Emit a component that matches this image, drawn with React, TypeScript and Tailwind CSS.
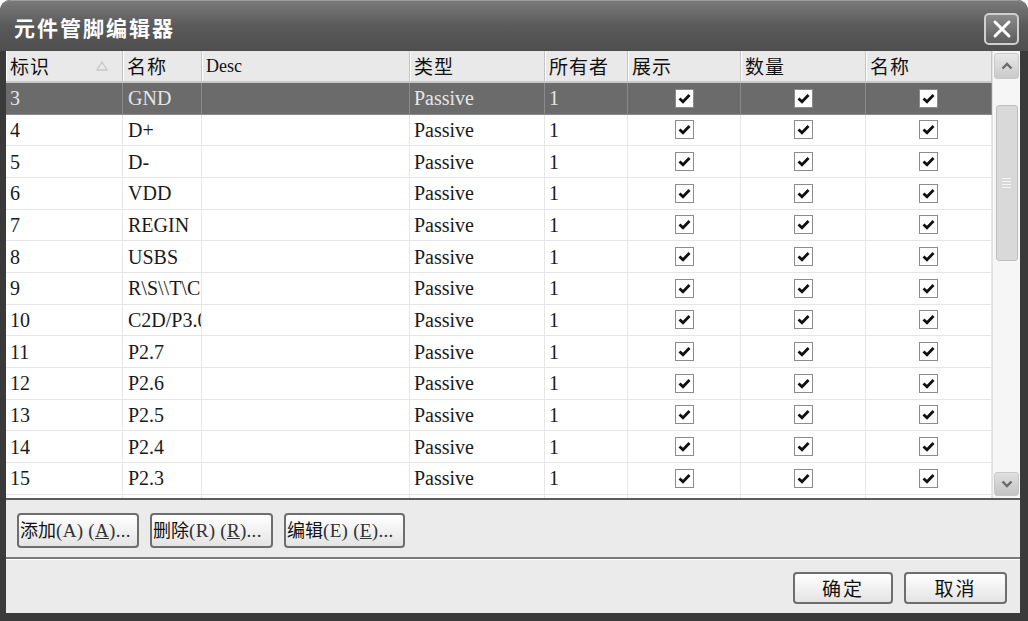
import { Fragment } from 'react';

const cols = [117, 79, 208, 135, 83, 113, 125, 126];
const headers = ['标识', '名称', 'Desc', '类型', '所有者', '展示', '数量', '名称'];

const rows = [
  ['3', 'GND'],
  ['4', 'D+'],
  ['5', 'D-'],
  ['6', 'VDD'],
  ['7', 'REGIN'],
  ['8', 'USBS'],
  ['9', 'R\\S\\\\T\\C'],
  ['10', 'C2D/P3.0'],
  ['11', 'P2.7'],
  ['12', 'P2.6'],
  ['13', 'P2.5'],
  ['14', 'P2.4'],
  ['15', 'P2.3'],
  ['16', 'P2.2'],
];

const cjk = { fontFamily: '"Noto Sans CJK SC", "Noto Sans", sans-serif' };
const serif = { fontFamily: '"Liberation Serif", "Noto Sans CJK SC", serif' };

function CheckBox() {
  return (
    <div className="w-[19px] h-[19px] bg-white border border-[#8c8c8c] flex items-center justify-center">
      <svg width="13" height="11" viewBox="0 0 13 11">
        <path d="M1.5 5.5 L5 8.8 L11.5 2" stroke="#111" strokeWidth="2.8" fill="none" />
      </svg>
    </div>
  );
}

function Btn({ label, w, left }: { label: React.ReactNode; w: string; left?: boolean }) {
  return (
    <div
      className={`${w} h-full rounded-[4px] border-2 border-[#6e6e6e] bg-gradient-to-b from-white to-[#e4e4e4] flex items-center ${
        left ? 'justify-start pl-[1px]' : 'justify-center'
      } text-[19px] leading-none text-[#111] whitespace-nowrap`}
      style={cjk}
    >
      {label}
    </div>
  );
}

function Mnemonic({ head, k }: { head: string; k: string }) {
  return (
    <span className="text-[18px] leading-none">
      {head}
      <span style={serif} className="text-[19px] leading-none tracking-[0.3px] text-[#333]">
        ({k}) (<span className="underline">{k}</span>)...
      </span>
    </span>
  );
}

export default function App() {
  return (
    <div className="w-[1028px] h-[621px] bg-[#3a3a3a] rounded-t-[10px] flex flex-col overflow-hidden select-none">
      {/* title bar */}
      <div className="h-[51px] shrink-0 rounded-t-[10px] bg-gradient-to-b from-[#7a7a7a] via-[#5a5a5a] to-[#4e4e4e] border-t border-[#9a9a9a] flex items-center justify-between pl-[14px] pr-[9px]">
        <span className="text-white text-[21px] font-bold tracking-[2px] mt-[4px]" style={cjk}>
          元件管脚编辑器
        </span>
        <div className="w-[35px] h-[32px] mt-[6px] rounded-[5px] border-2 border-[#cfcfcf] bg-gradient-to-b from-[#8a8a8a] to-[#5e5e5e] flex items-center justify-center">
          <svg width="20" height="20" viewBox="0 0 20 20">
            <path d="M3 3 L17 17 M17 3 L3 17" stroke="#fff" strokeWidth="3" strokeLinecap="round" />
          </svg>
        </div>
      </div>

      <div className="flex-1 flex flex-col pl-[6px] pr-[8px] pb-[8px]">
        {/* table */}
        <div className="h-[449px] shrink-0 flex border-b-2 border-[#5c5c5c] bg-white">
          <div className="flex-1 overflow-hidden">
            <div
              className="grid"
              style={{ gridTemplateColumns: cols.map((c) => `${c}px`).join(' ') }}
            >
              {headers.map((h, i) => (
                <div
                  key={i}
                  className={`h-[32px] bg-[#e9e9e9] border-b-2 border-[#c9c9c9] border-r border-r-[#c4c4c4] shadow-[inset_1px_0_0_#fff] flex items-center justify-between pl-[4px] pr-[14px] text-[#111] whitespace-nowrap ${
                    h === 'Desc' ? 'text-[18px]' : 'text-[19px]'
                  }`}
                  style={h === 'Desc' ? serif : cjk}
                >
                  <span className={h === 'Desc' ? '' : 'tracking-[1px]'}>{h}</span>
                  {i === 0 && (
                    <svg width="12" height="10" viewBox="0 0 12 10">
                      <path d="M6 1 L11 9 L1 9 Z" fill="none" stroke="#c8c8c8" strokeWidth="1.4" />
                    </svg>
                  )}
                </div>
              ))}
              {rows.map((r, ri) => {
                const sel = ri === 0;
                const cell = `h-[31.67px] flex items-center border-b border-r text-[20px] ${
                  sel ? 'bg-[#6b6b6b] text-[#e6e6e6] border-[#8a8a8a]' : 'bg-white text-[#1a1a1a] border-[#e6e6e6]'
                }`;
                return (
                  <Fragment key={ri}>
                    <div className={`${cell} pl-[4px]`} style={serif}>{r[0]}</div>
                    <div className={`${cell} pl-[5px] overflow-hidden whitespace-nowrap`} style={serif}>{r[1]}</div>
                    <div className={cell} />
                    <div className={`${cell} pl-[4px]`} style={serif}>Passive</div>
                    <div className={`${cell} pl-[4px]`} style={serif}>1</div>
                    <div className={`${cell} justify-center`}><CheckBox /></div>
                    <div className={`${cell} justify-center`}><CheckBox /></div>
                    <div className={`${cell} justify-center`}><CheckBox /></div>
                  </Fragment>
                );
              })}
            </div>
          </div>
          {/* scrollbar */}
          <div className="w-[28px] shrink-0 bg-[#f6f6f6] border-l border-[#e2e2e2] flex flex-col items-center pt-[2px] pb-[2px]">
            <div className="w-[25px] h-[26px] rounded-[3px] border border-[#c8c8c8] bg-gradient-to-b from-[#e8e8e8] to-[#c9c9c9] flex items-center justify-center">
              <svg width="12" height="8" viewBox="0 0 12 8">
                <path d="M1.5 6.5 L6 2 L10.5 6.5" stroke="#6a6a6a" strokeWidth="2.4" fill="none" />
              </svg>
            </div>
            <div className="mt-[26px] w-[22px] h-[156px] rounded-[3px] border border-[#c0c0c0] bg-[#d9d9d9] flex flex-col items-center justify-center gap-[2px]">
              <div className="w-[9px] h-px bg-[#f4f4f4]" />
              <div className="w-[9px] h-px bg-[#f4f4f4]" />
              <div className="w-[9px] h-px bg-[#f4f4f4]" />
              <div className="w-[9px] h-px bg-[#f4f4f4]" />
            </div>
            <div className="flex-1" />
            <div className="w-[25px] h-[24px] rounded-[3px] border border-[#c8c8c8] bg-gradient-to-b from-[#e0e0e0] to-[#c4c4c4] flex items-center justify-center">
              <svg width="12" height="8" viewBox="0 0 12 8">
                <path d="M1.5 1.5 L6 6 L10.5 1.5" stroke="#6a6a6a" strokeWidth="2.4" fill="none" />
              </svg>
            </div>
          </div>
        </div>

        {/* edit buttons */}
        <div className="h-[59px] shrink-0 bg-[#ebebeb] border-b-2 border-[#7a7a7a] flex items-center pl-[11px] pt-[3px]">
          <div className="h-[35px] flex gap-[11px]">
            <Btn left w="w-[122px]" label={<Mnemonic head="添加" k="A" />} />
            <Btn left w="w-[123px]" label={<Mnemonic head="删除" k="R" />} />
            <Btn left w="w-[121px]" label={<Mnemonic head="编辑" k="E" />} />
          </div>
        </div>

        {/* dialog buttons */}
        <div className="flex-1 bg-[#ebebeb] border-t border-white flex items-center justify-end pr-[13px] pt-[2px]">
          <div className="h-[32px] flex gap-[11px]">
            <Btn w="w-[100px]" label={<span className="tracking-[2px]">确定</span>} />
            <Btn w="w-[103px]" label={<span className="tracking-[2px]">取消</span>} />
          </div>
        </div>
      </div>
    </div>
  );
}
